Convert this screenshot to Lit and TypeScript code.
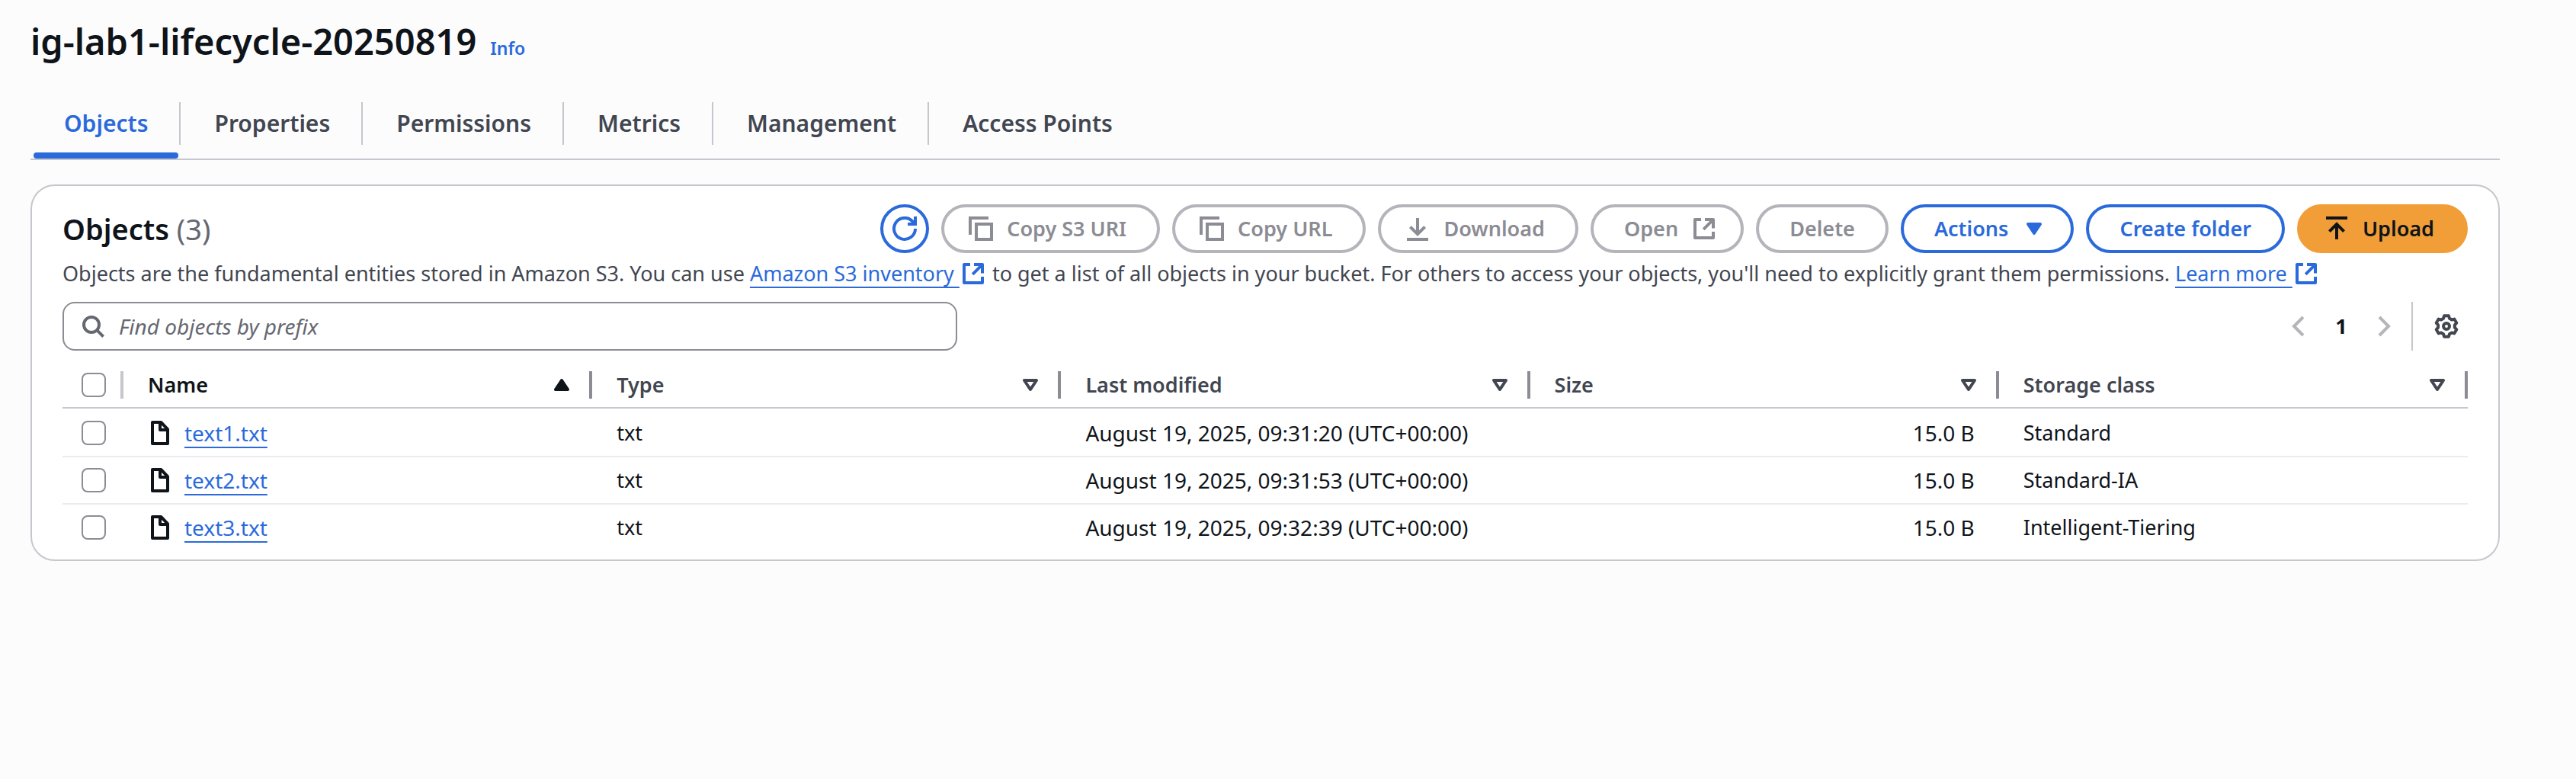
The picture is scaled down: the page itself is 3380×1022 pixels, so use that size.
import { LitElement, html, css, svg, nothing, TemplateResult } from "lit";
import { customElement, property, state } from "lit/decorators.js";

type IconName =
  | "refresh" | "copy" | "download" | "upload" | "external" | "caret" | "sort" | "sorted"
  | "search" | "prev" | "next" | "settings" | "file";

/** Outline of a six-toothed gear centred in a 16-unit box. */
function gearPath(): string {
  const points: string[] = [];
  for (let tooth = 0; tooth < 6; tooth++) {
    for (const [offset, radius] of [[-12, 7], [12, 7], [21, 5.5], [39, 5.5]]) {
      const a = ((tooth * 60 + offset - 90) * Math.PI) / 180;
      points.push(`${(8 + radius * Math.cos(a)).toFixed(2)} ${(8 + radius * Math.sin(a)).toFixed(2)}`);
    }
  }
  return `M${points.join("L")}Z`;
}

const icons: Record<IconName, TemplateResult> = {
  refresh: svg`<path d="M15 8a7 7 0 1 1-1.6-4.5L14.5 5M10 5h5V0"/>`,
  copy: svg`<path d="M1 12V1h12M5 5h10v10H5z"/>`,
  download: svg`<path d="M1 15h14M8 1v11M3.2 6.8 8 11.6l4.8-4.8"/>`,
  upload: svg`<path d="M1 1h14M8 15V5M3.2 9.8 8 5l4.8 4.8"/>`,
  external: svg`<path stroke-linejoin="round" d="M6 2H2v12h12v-4M8.5 2H14v5.7M13.8 2.2 7.6 8.4"/>`,
  caret: svg`<path fill="currentColor" stroke-linejoin="round" d="M4 5h8L8 11z"/>`,
  sort: svg`<path stroke-linejoin="round" d="M4 5h8L8 11z"/>`,
  sorted: svg`<path fill="currentColor" stroke-linejoin="round" d="M4 11h8L8 5z"/>`,
  search: svg`<circle cx="7" cy="7" r="5"/><path d="m10.6 10.6 4.2 4.2"/>`,
  prev: svg`<path d="M11 2 5 8l6 6"/>`,
  next: svg`<path d="m5 2 6 6-6 6"/>`,
  settings: svg`<path stroke-linejoin="round" d=${gearPath()}/><circle cx="8" cy="8" r="2"/>`,
  file: svg`<path stroke-linejoin="round" d="M3 1h5.6L13 5.6V15H3zM8 1v5h5"/>`,
};

@customElement("ui-icon")
export class UiIcon extends LitElement {
  @property() name: IconName = "file";
  static styles = css`
    :host { display: inline-flex; flex: none; width: 32px; height: 32px; }
    .glyph { width: 100%; height: 100%; fill: none; stroke: currentColor; stroke-width: 2; }
  `;
  render() {
    return html`<svg class="glyph" viewBox="0 0 16 16" aria-hidden="true">${icons[this.name]}</svg>`;
  }
}

interface Action {
  label: string;
  icon?: IconName;
  iconEnd?: IconName;
  kind: "normal" | "primary";
  disabled?: boolean;
}

const tabs = ["Objects", "Properties", "Permissions", "Metrics", "Management", "Access Points"];

const actions: Action[] = [
  { label: "Copy S3 URI", icon: "copy", kind: "normal", disabled: true },
  { label: "Copy URL", icon: "copy", kind: "normal", disabled: true },
  { label: "Download", icon: "download", kind: "normal", disabled: true },
  { label: "Open", iconEnd: "external", kind: "normal", disabled: true },
  { label: "Delete", kind: "normal", disabled: true },
  { label: "Actions", iconEnd: "caret", kind: "normal" },
  { label: "Create folder", kind: "normal" },
  { label: "Upload", icon: "upload", kind: "primary" },
];

const columns = ["Name", "Type", "Last modified", "Size", "Storage class"];

const objects = [
  { name: "text1.txt", type: "txt", modified: "August 19, 2025, 09:31:20 (UTC+00:00)", size: "15.0 B", storage: "Standard" },
  { name: "text2.txt", type: "txt", modified: "August 19, 2025, 09:31:53 (UTC+00:00)", size: "15.0 B", storage: "Standard-IA" },
  { name: "text3.txt", type: "txt", modified: "August 19, 2025, 09:32:39 (UTC+00:00)", size: "15.0 B", storage: "Intelligent-Tiering" },
];

@customElement("app-root")
export class AppRoot extends LitElement {
  @state() private activeTab = "Objects";

  static styles = css`
    :host {
      display: block;
      box-sizing: border-box;
      min-height: 100vh;
      padding: 24px 100px 24px 40px;
      background: #fcfcfd;
      color: #0f141a;
      font-family: "Noto Sans", "Open Sans", sans-serif;
      font-size: 27px;
      line-height: 38px;
    }
    *, *::before, *::after { box-sizing: border-box; }
    button, input { font: inherit; color: inherit; }
    button { padding: 0; border: 0; background: none; }
    a { color: #2b6adb; text-decoration: none; }

    .title { display: flex; align-items: baseline; gap: 18px; }
    .title-text { margin: 0; font-size: 47px; font-weight: 600; line-height: 60px; }
    .info { font-size: 23px; font-weight: 600; }

    .tabs {
      display: flex;
      margin: 40px 0 0;
      padding: 0 0 0 4px;
      list-style: none;
      border-bottom: 2px solid #c6c6cd;
    }
    .tab-item { display: flex; }
    .tab-item:not(:last-child)::after {
      content: "";
      width: 2px;
      height: 56px;
      margin: 10px 4px 0 1px;
      background: #c6c6cd;
    }
    .tab {
      display: flex;
      flex-direction: column;
      color: #424650;
      font-size: 30px;
      font-weight: 600;
      line-height: 44px;
    }
    .tab-label { padding: 16px 40px; }
    .tab-bar { height: 8px; border-radius: 4px; }
    .tab.active { color: #2b6adb; }
    .tab.active .tab-bar { background: #2b6adb; }

    .card {
      margin-top: 32px;
      padding: 24px 40px 10px;
      border: 2px solid #c6c6cd;
      border-radius: 32px;
      background: #fff;
    }
    .card-head { display: flex; align-items: center; justify-content: space-between; }
    .card-title { margin: 0; font-size: 38px; font-weight: 600; line-height: 48px; }
    .count { color: #656871; font-weight: 400; }
    .actions { display: flex; gap: 16px; }
    .btn {
      display: flex;
      align-items: center;
      gap: 18px;
      height: 64px;
      padding: 0 40px;
      border: 4px solid #2b6adb;
      border-radius: 32px;
      color: #2b6adb;
      font-weight: 600;
      white-space: nowrap;
    }
    .btn.lead { padding-left: 32px; }
    .btn.trail { padding-right: 32px; }
    .btn.round { justify-content: center; width: 64px; padding: 0; }
    .btn.primary { border-color: #f29e38; background: #f29e38; color: #0f141a; }
    .btn:disabled { border-color: #b4b4bb; color: #8c8c94; }

    .description { margin: 8px 0 0; color: #424650; }
    .text-link {
      text-decoration: underline;
      text-decoration-thickness: 2px;
      text-underline-offset: 7px;
      text-decoration-skip-ink: none;
    }
    .text-link ui-icon { margin: 0 2px; vertical-align: -6px; }

    .tools { display: flex; align-items: center; justify-content: space-between; margin-top: 18px; }
    .search {
      display: flex;
      align-items: center;
      gap: 18px;
      flex: 0 1 37.2%;
      height: 64px;
      padding: 0 22px;
      border: 2px solid #8c8c94;
      border-radius: 16px;
      color: #656871;
      font-size: 28px;
    }
    .search-input { flex: 1; min-width: 0; padding: 0; border: 0; outline: 0; background: none; }
    .search-input::placeholder { color: #656871; font-style: italic; opacity: 1; }
    .pager { display: flex; align-items: center; }
    .page-step { display: flex; color: #b4b4bb; }
    .page-number { width: 80px; font-weight: 700; text-align: center; }
    .rule { width: 2px; height: 64px; margin: 0 28px 0 20px; background: #c6c6cd; }
    .gear { display: flex; margin-right: 12px; color: #424650; }

    .table { width: 100%; margin-top: 16px; border-collapse: separate; border-spacing: 0; table-layout: fixed; }
    .head-cell { height: 60px; padding: 0; border-bottom: 2px solid #c6c6cd; color: #424650; font-weight: 600; text-align: left; }
    .head-cell.sorted { color: #0f141a; }
    .select-col { width: 80px; }
    .head-inner { display: flex; align-items: center; padding-left: 32px; }
    .select-col .head-inner { padding-left: 25px; }
    .head-sort { display: flex; flex: 1; align-items: center; justify-content: space-between; padding-right: 20px; font-weight: 600; }
    .head-inner::after { content: ""; flex: none; width: 4px; height: 36px; margin-left: auto; background: #8c8c94; }
    .select-col .head-inner::after { background: #c6c6cd; }
    .cell { height: 62px; padding: 11px 32px; border-bottom: 2px solid #ebebf0; text-align: left; }
    .row:first-child .cell { padding-top: 13px; }
    .row:last-child .cell { border-bottom-color: transparent; }
    .cell.select { padding-left: 25px; padding-right: 0; }
    .cell.figure { font-size: 28px; }
    .cell.size { text-align: right; }
    .name { display: flex; align-items: center; gap: 16px; }
    .check {
      appearance: none;
      display: block;
      width: 32px;
      height: 32px;
      margin: 0;
      border: 2px solid #8c8c94;
      border-radius: 8px;
      background: #fff;
    }
  `;

  private renderTab(label: string) {
    const active = label === this.activeTab;
    return html`<li class="tab-item" role="presentation">
      <button class="tab ${active ? "active" : ""}" role="tab" aria-selected=${active} @click=${() => (this.activeTab = label)}>
        <span class="tab-label">${label}</span><span class="tab-bar"></span>
      </button>
    </li>`;
  }

  private renderAction(a: Action) {
    return html`<button class="btn ${a.kind} ${a.icon ? "lead" : ""} ${a.iconEnd ? "trail" : ""}" ?disabled=${a.disabled}>
      ${a.icon ? html`<ui-icon name=${a.icon}></ui-icon>` : nothing}<span>${a.label}</span>${a.iconEnd ? html`<ui-icon name=${a.iconEnd}></ui-icon>` : nothing}
    </button>`;
  }

  render() {
    return html`
      <header class="title">
        <h1 class="title-text">ig-lab1-lifecycle-20250819</h1>
        <a class="info" href="#info">Info</a>
      </header>
      <ul class="tabs" role="tablist">${tabs.map((t) => this.renderTab(t))}</ul>
      <section class="card">
        <div class="card-head">
          <h2 class="card-title">Objects <span class="count">(${objects.length})</span></h2>
          <div class="actions">
            <button class="btn round" aria-label="Refresh"><ui-icon name="refresh"></ui-icon></button>
            ${actions.map((a) => this.renderAction(a))}
          </div>
        </div>
        <p class="description">
          Objects are the fundamental entities stored in Amazon S3. You can use
          <a class="text-link" href="#inventory">Amazon S3 inventory <ui-icon name="external"></ui-icon></a>
          to get a list of all objects in your bucket. For others to access your objects, you'll need to explicitly grant them permissions.
          <a class="text-link" href="#learn">Learn more <ui-icon name="external"></ui-icon></a>
        </p>
        <div class="tools">
          <label class="search">
            <ui-icon name="search"></ui-icon>
            <input class="search-input" type="text" placeholder="Find objects by prefix" aria-label="Find objects by prefix" />
          </label>
          <div class="pager">
            <button class="page-step" aria-label="Previous page" disabled><ui-icon name="prev"></ui-icon></button>
            <button class="page-number" aria-current="page">1</button>
            <button class="page-step" aria-label="Next page" disabled><ui-icon name="next"></ui-icon></button>
            <span class="rule"></span>
            <button class="gear" aria-label="Preferences"><ui-icon name="settings"></ui-icon></button>
          </div>
        </div>
        <table class="table">
          <thead>
            <tr>
              <th class="head-cell select-col" scope="col">
                <div class="head-inner"><input class="check" type="checkbox" aria-label="Select all objects" /></div>
              </th>
              ${columns.map((c, i) => html`<th class="head-cell ${i === 0 ? "sorted" : ""}" scope="col">
                <div class="head-inner">
                  <button class="head-sort"><span>${c}</span><ui-icon name=${i === 0 ? "sorted" : "sort"}></ui-icon></button>
                </div>
              </th>`)}
            </tr>
          </thead>
          <tbody>
            ${objects.map((o) => html`<tr class="row">
              <td class="cell select"><input class="check" type="checkbox" aria-label="Select ${o.name}" /></td>
              <td class="cell figure"><div class="name"><ui-icon name="file"></ui-icon><a class="text-link" href="#${o.name}">${o.name}</a></div></td>
              <td class="cell">${o.type}</td>
              <td class="cell figure">${o.modified}</td>
              <td class="cell figure size">${o.size}</td>
              <td class="cell">${o.storage}</td>
            </tr>`)}
          </tbody>
        </table>
      </section>
    `;
  }
}
